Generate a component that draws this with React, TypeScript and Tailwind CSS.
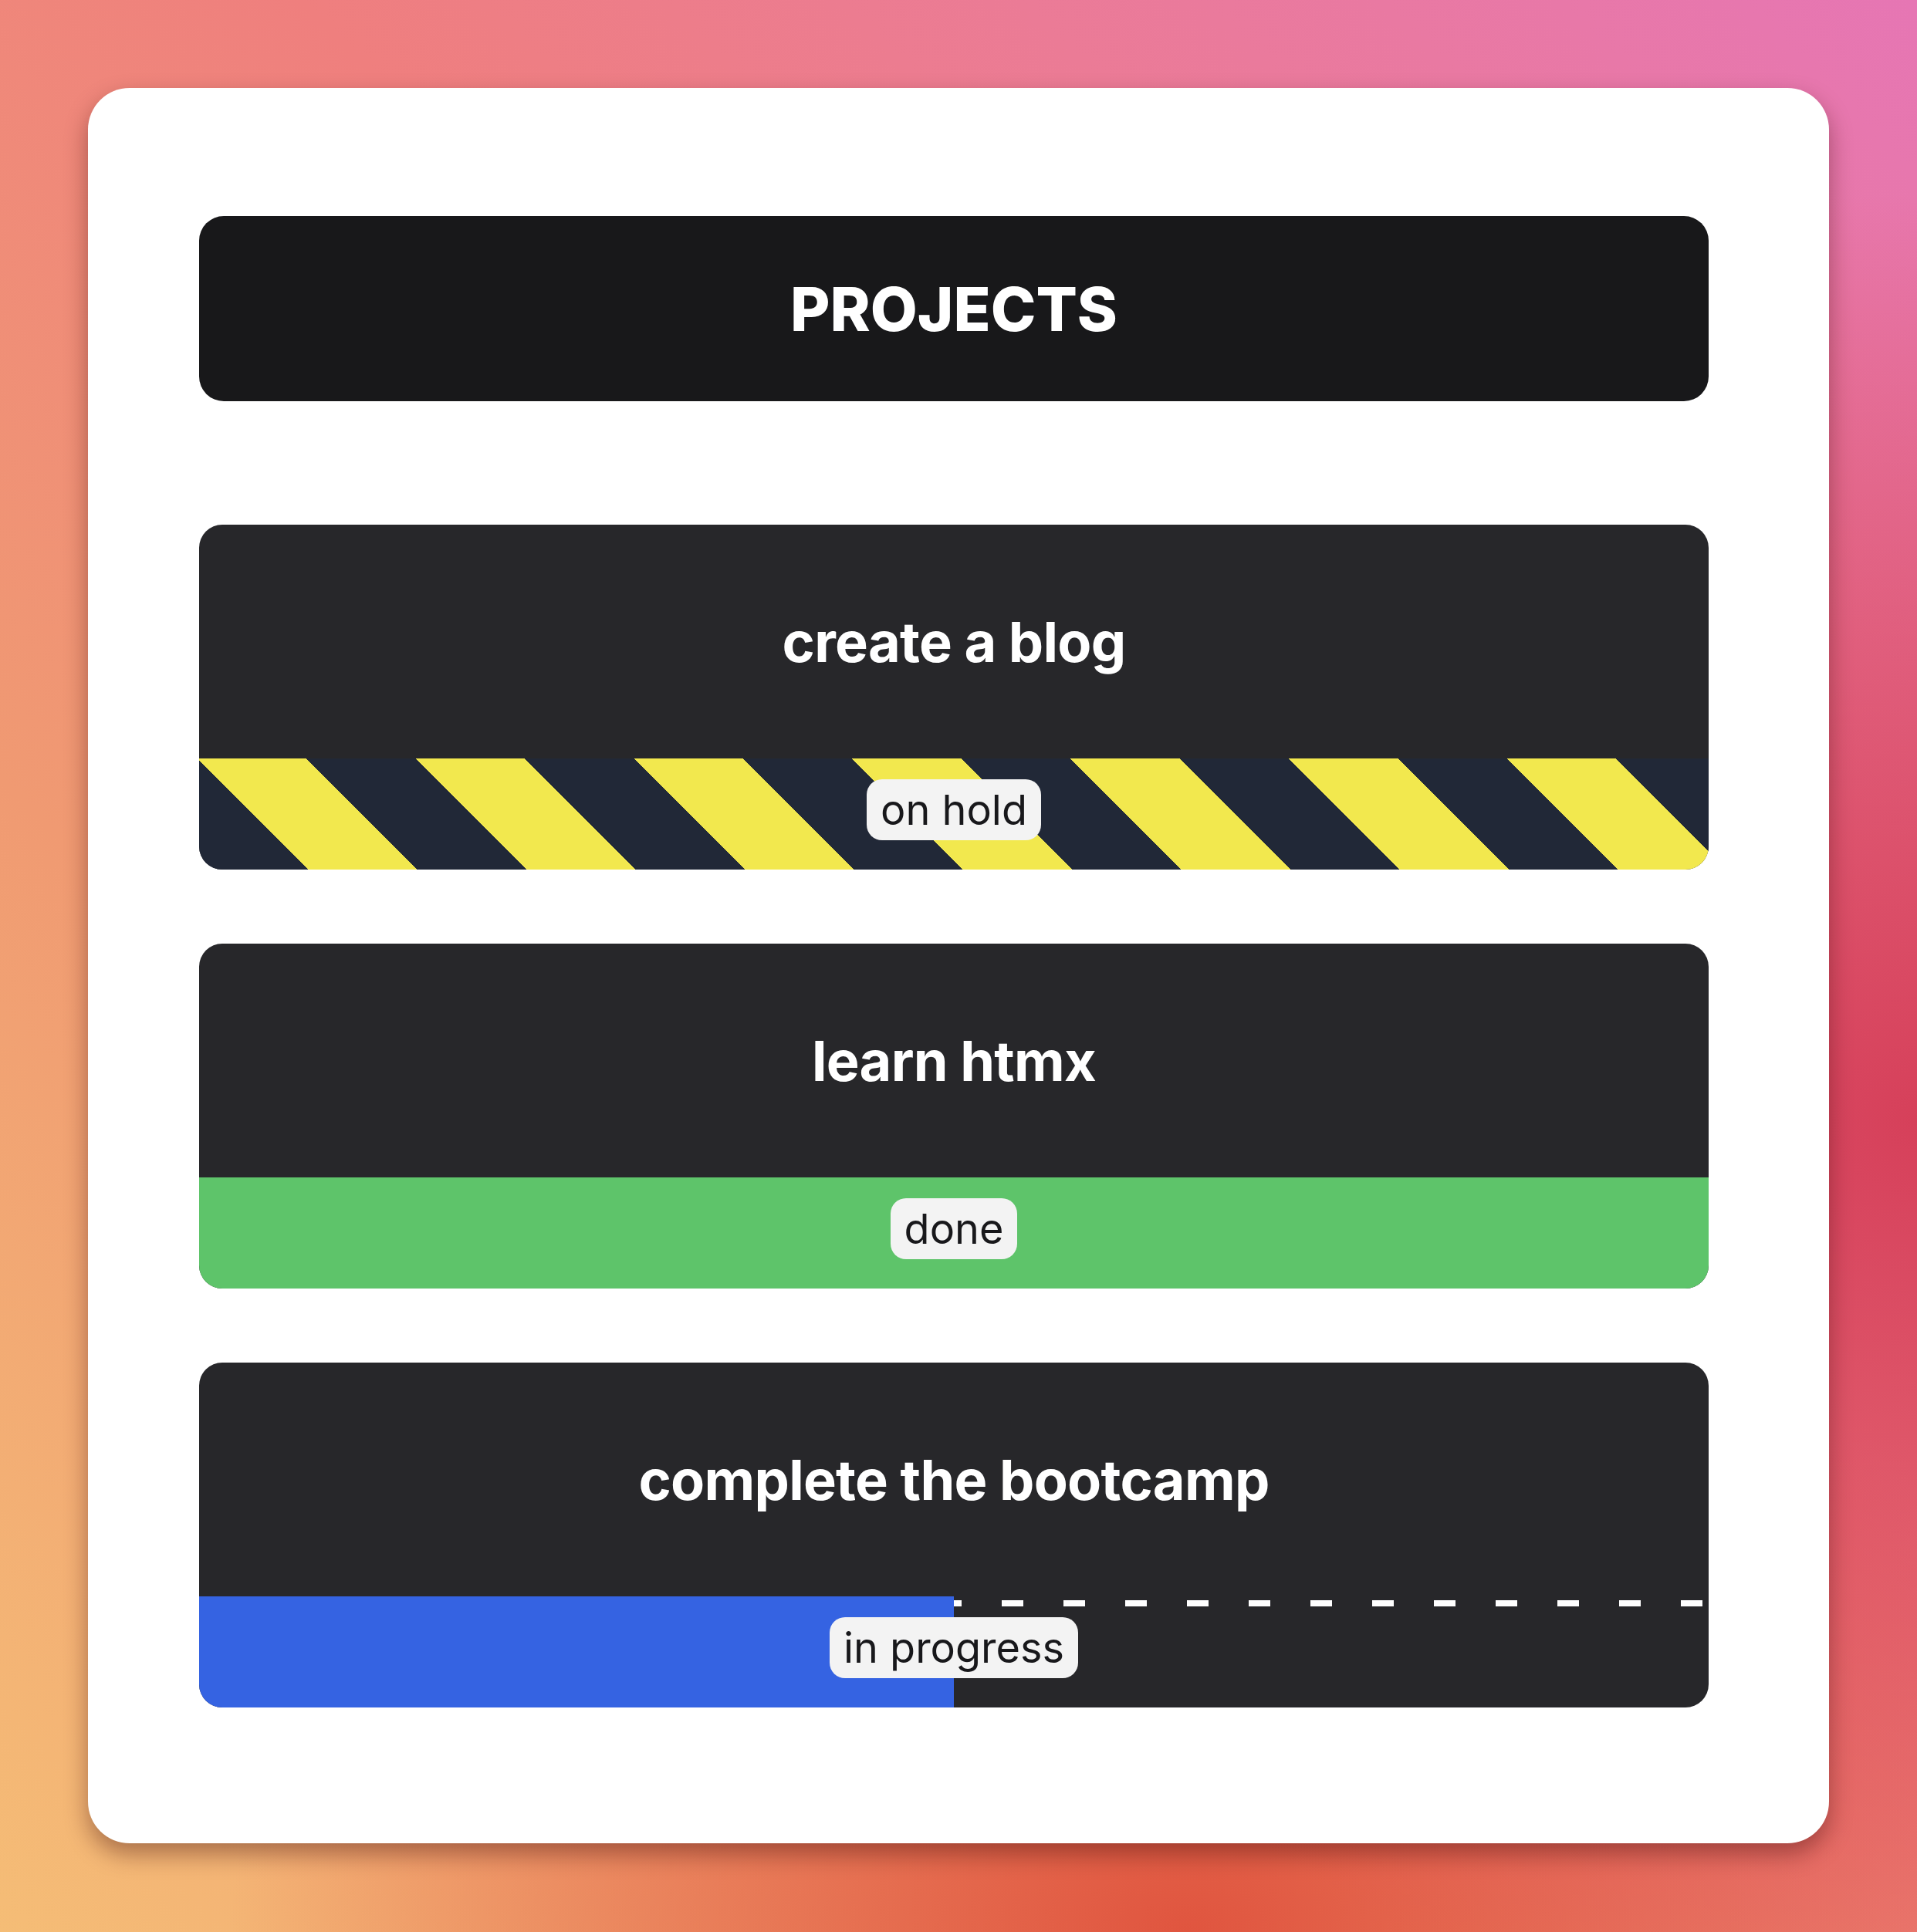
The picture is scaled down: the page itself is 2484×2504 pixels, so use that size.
import React from 'react'

type Status = 'on hold' | 'done' | 'in progress'

const projects: { title: string; status: Status }[] = [
  { title: 'create a blog', status: 'on hold' },
  { title: 'learn htmx', status: 'done' },
  { title: 'complete the bootcamp', status: 'in progress' },
]

function Badge({ label }: { label: string }) {
  return (
    <span className="relative z-10 h-[79px] rounded-[20px] bg-[#f3f3f3] px-[18px] text-[54px] leading-[80px] font-normal text-[#18181b]">
      {label}
    </span>
  )
}

function StatusBand({ status }: { status: Status }) {
  if (status === 'on hold') {
    return (
      <div className="flex h-[144px] justify-center bg-[repeating-linear-gradient(45deg,#212837_0px,#212837_100px,#f2e84e_100px,#f2e84e_200px)] pt-[27px]">
        <Badge label={status} />
      </div>
    )
  }
  if (status === 'done') {
    return (
      <div className="flex h-[144px] justify-center bg-[#5ec46a] pt-[27px]">
        <Badge label={status} />
      </div>
    )
  }
  // in progress: half filled, dashed road on the rest
  return (
    <div className="relative flex h-[144px] justify-center pt-[27px]">
      <div className="absolute inset-x-0 top-[5px] h-[8px] bg-[repeating-linear-gradient(90deg,#ffffff_0px,#ffffff_28px,transparent_28px,transparent_80px)]" />
      <div className="absolute inset-y-0 left-0 w-1/2 bg-[#3563e2]" />
      <Badge label={status} />
    </div>
  )
}

function ProjectCard({ title, status }: { title: string; status: Status }) {
  return (
    <div className="flex flex-col overflow-hidden rounded-[30px] bg-[#27272a]">
      <div className="flex h-[303px] items-center justify-center">
        <h2 className="text-[72px] font-bold tracking-[-0.01em] text-white">{title}</h2>
      </div>
      <StatusBand status={status} />
    </div>
  )
}

export default function App() {
  return (
    <div className="min-h-[2504px] w-[2484px] bg-[radial-gradient(ellipse_55%_48%_at_100%_58%,#d6405a_0%,transparent_100%),radial-gradient(ellipse_50%_35%_at_62%_100%,#e0553f_0%,transparent_100%),linear-gradient(45deg,#f5bd76_0%,#f09a72_30%,#ef7f7e_58%,#e676b4_100%)] p-[114px] font-['Inter','Liberation_Sans',sans-serif]">
      <div className="flex flex-col rounded-[54px] bg-white pt-[166px] pr-[156px] pb-[176px] pl-[144px] shadow-[0_14px_30px_rgba(60,10,10,0.4)]">
        <div className="flex h-[240px] items-center justify-center rounded-[32px] bg-[#18181a]">
          <h1 className="text-[79px] font-extrabold text-white">PROJECTS</h1>
        </div>
        <div className="mt-[160px] flex flex-col gap-[96px]">
          {projects.map((p) => (
            <ProjectCard key={p.title} title={p.title} status={p.status} />
          ))}
        </div>
      </div>
    </div>
  )
}
